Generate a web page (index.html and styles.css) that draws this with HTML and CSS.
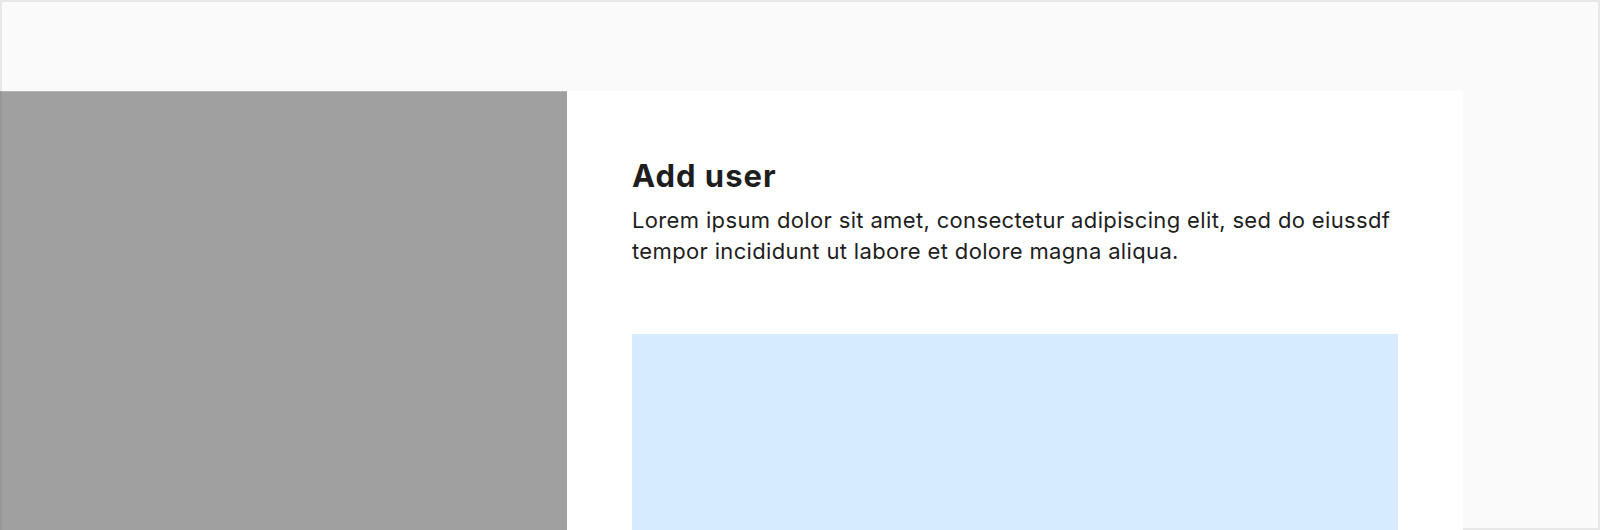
FILE: index.html
```html
<!DOCTYPE html>
<html lang="en">
<head>
    <meta charset="UTF-8">
    <meta name="viewport" content="width=device-width, initial-scale=1.0">
    <title>Add user</title>
    <link rel="stylesheet" href="styles.css">
</head>
<body>
    <div class="frame">
        <div class="topbar"></div>
        <div class="workspace">
            <div class="backdrop"></div>
            <div class="sheet">
                <h1 class="sheet-title">Add user</h1>
                <p class="sheet-desc">Lorem ipsum dolor sit amet, consectetur adipiscing elit, sed do eiussdf tempor incididunt ut labore et dolore magna aliqua.</p>
                <div class="slot"></div>
            </div>
        </div>
    </div>
</body>
</html>
```

FILE: styles.css
```css
html, body {
    margin: 0;
    padding: 0;
}
body {
    font-family: Inter, 'Noto Sans', sans-serif;
    background-color: #fafafa;
    overflow: hidden;
}
.frame {
    box-sizing: border-box;
    width: 1600px;
    height: 530px;
    border: 2px solid #e8e8e8;
    background-color: #fafafa;
}
.topbar {
    height: 89px;
}
.workspace {
    display: flex;
    height: 439px;
    margin-left: -2px;
}
.backdrop {
    box-sizing: border-box;
    width: 567px;
    border-left: 2px solid #979797;
    border-top: 1px solid #b4b4b4;
    background-color: #a0a0a0;
}
.sheet {
    box-sizing: border-box;
    width: 896px;
    padding: 66px 65px 0;
    background-color: #fff;
    overflow: hidden;
}
.sheet-title {
    margin: 0;
    font-size: 31px;
    font-weight: 700;
    line-height: 38px;
    letter-spacing: 1px;
    color: #1e1e1e;
}
.sheet-desc {
    margin: 10px -50px 0 0;
    font-size: 22px;
    line-height: 31px;
    letter-spacing: 0.35px;
    color: #1e1e1e;
}
.slot {
    height: 300px;
    margin-top: 67px;
    background-color: #d6ebfd;
}
```
